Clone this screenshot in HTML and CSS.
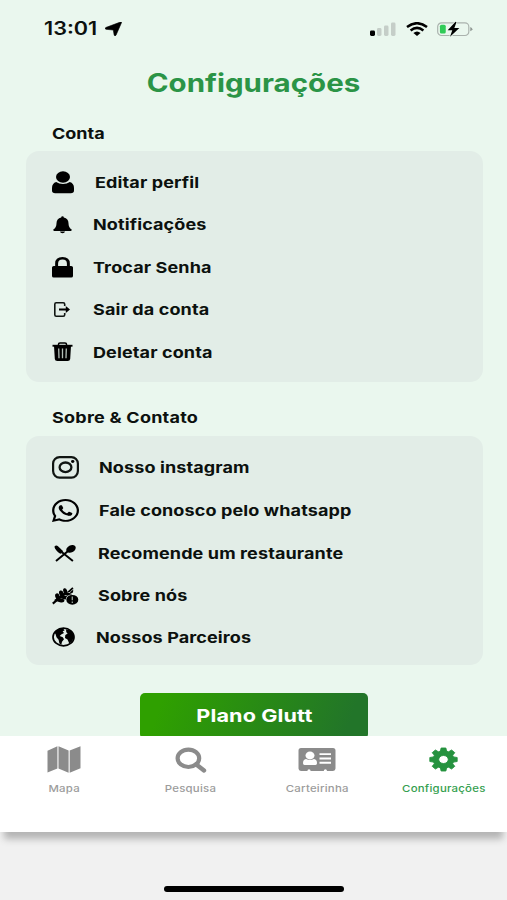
FILE: index.html
```html
<!DOCTYPE html>
<html lang="pt-BR">
<head>
<meta charset="utf-8">
<title>Configurações</title>
<link rel="stylesheet" href="styles.css">
</head>
<body>
<div class="screen">
  <header class="status">
    <div class="clock"><span class="time">13:01</span>
      <svg class="arrow" viewBox="0 0 17 14" preserveAspectRatio="none"><path d="M16.600.400 11 13.200Q10.200 14.600 9.200 13.200L8.300 8 1 7.300Q-.7 6.500.8 5.500L15.400.1Q16.800-.2 16.600.400Z" stroke="#000" stroke-width=".6"/></svg>
    </div>
    <div class="indicators">
      <svg width="26" height="14" viewBox="0 0 26 14"><rect x="0" y="8.500" width="5" height="5.500" rx="1.400"/><g fill="#c5cec8"><rect x="7" y="6" width="4.500" height="8" rx="1.400"/><rect x="14" y="3.500" width="4.500" height="10.500" rx="1.400"/><rect x="21" y=".5" width="4.500" height="13.500" rx="1.400"/></g></svg>
      <svg class="wifi" width="22" height="14" viewBox="0 0 22 14"><g fill="none" stroke="#000" stroke-width="2.500"><path d="M1 5Q11-2.600 21 5"/><path d="M4.600 8.500Q11 3.300 17.400 8.500"/></g><path d="M7.400 11Q11 7.800 14.600 11L11 13.900Z"/></svg>
      <svg class="battery" width="37" height="16" viewBox="0 0 37 16"><rect x=".7" y="1.700" width="32" height="13" rx="4" fill="none" stroke="#aab2ad" stroke-width="1.200"/><path d="M34.200 6Q36.400 7 36.400 8.200T34.200 10.400Z" fill="#929a95"/><rect x="3" y="3.700" width="6" height="9" rx="1.600" fill="#2fcb57"/><path d="M19 .5 11 9.200h4.700L13.400 16 23 7h-5.200L20 1Z" stroke="#eaf7ee" stroke-width="1.600" paint-order="stroke"/></svg>
    </div>
  </header>

  <main class="content">
    <h1><span>Configurações</span></h1>

    <h2><span>Conta</span></h2>
    <ul class="card account">
      <li class="profile"><svg width="22" height="23" viewBox="0 0 22 23"><ellipse cx="11" cy="6" rx="7" ry="5.700"/><path d="M4.200 11Q7 12.900 11 12.900T17.800 11Q22 12.300 22 17V19.500Q22 22.300 18.800 22.300H3.200Q0 22.300 0 19.500V17Q0 12.300 4.200 11Z"/></svg><span>Editar perfil</span></li>
      <li><svg class="bell" width="19" height="18" viewBox="0 0 19 18"><path d="M8.200 1.400Q8.200.2 9.500.2t1.300 1.200Q15.500 2.400 15.500 7.200 15.500 11.300 18.700 13.600 19 15 17.800 15H1.200Q0 15 .3 13.600 3.500 11.300 3.500 7.200 3.500 2.400 8.200 1.400ZM7 15.400h5Q11.800 17.200 9.500 17.200T7 15.400Z"/></svg><span>Notificações</span></li>
      <li><svg width="21" height="21" viewBox="0 0 20 21" preserveAspectRatio="none"><path fill-rule="evenodd" d="M3 9V6.500Q3 0 10 0t7 6.500V9H18.300Q20 9 20 10.500V19Q20 20.500 18.300 20.500H1.700Q0 20.500 0 19V10.500Q0 9 1.700 9ZM5.800 9h8.400V6.500Q14.200 2.500 10 2.500T5.800 6.500Z"/></svg><span>Trocar Senha</span></li>
      <li><svg class="exit" width="16" height="15" viewBox="0 0 16 15"><path d="M10.700 4V2.200Q10.700.8 9.200.8H2.200Q.8.800.8 2.200V12.800Q.8 14.200 2.200 14.200H9.200Q10.700 14.200 10.700 12.800V11" fill="none" stroke="#101512" stroke-width="1.600"/><path d="M5 6.400h6.800V4L16 7.500 11.800 11V8.600H5Z"/></svg><span>Sair da conta</span></li>
      <li><svg width="21" height="20" viewBox="0 0 21 20"><path d="M6.500 3.200V2.200Q6.500.9 8 .9H13Q14.500.9 14.500 2.200V3.200" fill="none" stroke="#000" stroke-width="1.500"/><path d="M.5 2.800H20.500V4.700H.5Z"/><path d="M2 4H19L18.200 17Q18 19 15.700 19H5.300Q3 19 2.800 17Z"/><path d="M6.700 6.500 7 16.300M10.500 6.500V16.300M14.300 6.500 14 16.300" stroke="#b4c0b9" stroke-width="1.300"/></svg><span>Deletar conta</span></li>
    </ul>

    <h2 class="second"><span>Sobre &amp; Contato</span></h2>
    <ul class="card contact">
      <li><svg width="27" height="23" viewBox="0 0 27 23"><g fill="none" stroke="#101512"><rect x="1.100" y="1.100" width="24.800" height="20.500" rx="6.500" stroke-width="2.200"/><ellipse cx="13.500" cy="11.300" rx="5.900" ry="4.800" stroke-width="2.300"/></g><ellipse cx="20.700" cy="5.500" rx="1.700" ry="1.400"/></svg><span>Nosso instagram</span></li>
      <li class="whatsapp"><svg width="27" height="23" viewBox="0 32 448 448" preserveAspectRatio="none"><path d="M380.900 97.100C339 55.100 283.200 32 223.900 32c-122.400 0-222 99.600-222 222 0 39.100 10.200 77.300 29.600 111L0 480l117.700-30.900c32.400 17.700 68.900 27 106.100 27h.1c122.300 0 224.100-99.600 224.100-222 0-59.300-25.200-115-67.100-157zm-157 341.600c-33.200 0-65.700-8.900-94-25.700l-6.700-4-69.800 18.300L72 359.200l-4.400-7c-18.500-29.400-28.200-63.300-28.200-98.200 0-101.700 82.800-184.500 184.600-184.500 49.300 0 95.600 19.200 130.400 54.100 34.800 34.900 56.200 81.200 56.100 130.500 0 101.800-84.900 184.600-186.600 184.600zm101.200-138.200c-5.500-2.800-32.800-16.200-37.900-18-5.100-1.900-8.800-2.800-12.500 2.800-3.700 5.600-14.300 18-17.600 21.800-3.200 3.700-6.500 4.200-12 1.400-32.600-16.300-54-29.100-75.500-66-5.700-9.800 5.700-9.100 16.300-30.300 1.800-3.700.9-6.900-.5-9.700-1.400-2.800-12.500-30.100-17.100-41.200-4.500-10.800-9.100-9.300-12.500-9.500-3.200-.2-6.900-.2-10.600-.2-3.700 0-9.700 1.400-14.800 6.900-5.100 5.600-19.400 19-19.400 46.300 0 27.300 19.900 53.700 22.600 57.400 2.800 3.700 39.100 59.700 94.800 83.800 35.200 15.200 49 16.500 66.600 13.900 10.700-1.600 32.800-13.400 37.400-26.400 4.600-13 4.600-24.100 3.200-26.400-1.300-2.500-5-3.900-10.500-6.600z"/></svg><span>Fale conosco pelo whatsapp</span></li>
      <li class="food"><svg width="22" height="17" viewBox="0 0 22 17"><path d="M.4 1.700Q2.200-.3 4 1.300L9.200 6.300 7.500 8.200 6.300 8.700Q1.500 5.800.4 1.700Z"/><path d="M8 7.300 18.900 16M2 16 15 5.300" fill="none" stroke="#000" stroke-width="2"/><ellipse cx="17" cy="3.900" rx="5" ry="3.500" transform="rotate(-28 17 3.900)"/></svg><span>Recomende um restaurante</span></li>
      <li class="about"><svg width="27" height="18" viewBox="0 0 27 18"><path d="M.8 16.600 5 13" stroke="#000" stroke-width="2.200"/><g><ellipse cx="5.500" cy="9.400" rx="2.200" ry="3.200" transform="rotate(-20 5.500 9.400)"/><ellipse cx="9.400" cy="6.600" rx="2.200" ry="3.200" transform="rotate(-20 9.400 6.600)"/><ellipse cx="13.200" cy="4" rx="1.900" ry="2.900" transform="rotate(-20 13.200 4)"/><ellipse cx="8.300" cy="13.300" rx="4.200" ry="2" transform="rotate(10 8.300 13.300)"/><ellipse cx="12.300" cy="10.300" rx="4.200" ry="1.900" transform="rotate(10 12.300 10.300)"/><ellipse cx="16.400" cy="7.300" rx="3.800" ry="1.600" transform="rotate(10 16.400 7.300)"/><path d="m14.800 5.300 5.500-5.100 1.200 1.200-4 3.800ZM18 5.200 21.300 2.600 21 5.500 18.500 6.400Z"/><path d="M3 14 15 5" stroke="#000" stroke-width="2.400"/></g><ellipse cx="20.300" cy="12.800" rx="6" ry="4.900" stroke="#e2ede7" paint-order="stroke" stroke-width="1.200"/><path d="M20.300 9.500V13.300M20.300 14.500V16.100" stroke="#9ba7a0" stroke-width="1.300"/></svg><span>Sobre nós</span></li>
      <li class="partners"><svg width="23" height="20" viewBox="0 0 23 20"><ellipse cx="11.500" cy="10" rx="10.500" ry="8.800" fill="none" stroke="#000" stroke-width="1.700"/><path d="M2.500 5.500 6.200 2.200 11.200 1.600 12.600 3.600 10.600 4.300 12 5.900 9.200 7.400 7.700 9 10.800 10.300 12 12.300 10 14.700 9.300 17.800 7.400 16.600 6.600 12.700 4.500 10.300 3.600 7.200ZM14 2.200 18.800 3.400 21.300 7.200 21.700 11 19.700 14.800 17.300 16.500 15.500 12.500 13 11 13.300 8 15.700 6.600 14.300 5.200Z"/></svg><span>Nossos Parceiros</span></li>
    </ul>
    <button class="plan"><span>Plano Glutt</span></button>
  </main>

  <nav class="tabs">
    <a><svg width="34" height="27" viewBox="0 0 34 27"><path d="M.5 4.800 10.400.2V22.400L.5 26.600ZM11.500.2 21.600 4.500V26.700L11.500 22.400ZM22.700 4.500 33.500.2V22.200L22.700 26.700Z"/></svg><span>Mapa</span></a>
    <a><svg width="32" height="27" viewBox="0 0 32 27"><ellipse cx="13.400" cy="12.300" rx="10.800" ry="8.700" fill="none" stroke="#8b8b8b" stroke-width="4.200"/><path d="m21 18.300 8 6.200" fill="none" stroke="#8b8b8b" stroke-width="4.400" stroke-linecap="round"/></svg><span>Pesquisa</span></a>
    <a><svg width="38" height="27" viewBox="0 0 38 27"><path d="M3 2H35Q37.500 2 37.500 4.500V22.600Q37.500 25 35 25H29Q29 23.300 27.400 23.300T25.800 25H12.600Q12.600 23.300 11 23.300T9.400 25H3Q.5 25 .5 22.600V4.500Q.5 2 3 2Z"/><g fill="#fff"><ellipse cx="12" cy="9.500" rx="4.500" ry="3.900"/><path d="M8 13Q12 15 16 13 19 13.300 19 17.300 19 19 17.500 19H6.500Q5 19 5 17.300 5 13.300 8 13ZM21.500 7.200H33V9.100H21.500ZM21.500 11.500H33V13.400H21.500ZM21.500 15.800H33V17.700H21.500Z"/></g></svg><span>Carteirinha</span></a>
    <a class="active"><svg width="30" height="27" viewBox="0 0 30 27"><g transform="translate(14.500 13.500) scale(1.190 1)"><path fill-rule="evenodd" d="M-2-11.500H2L2.600-8.400 4.300-7.700 6.800-9.500 9.500-6.800 7.700-4.300 8.400-2.600 11.500-2V2L8.400 2.600 7.700 4.300 9.500 6.800 6.800 9.500 4.300 7.700 2.600 8.400 2 11.500H-2L-2.600 8.400-4.300 7.700-6.800 9.500-9.500 6.800-7.700 4.300-8.400 2.600-11.500 2V-2L-8.400-2.600-7.700-4.300-9.500-6.800-6.800-9.500-4.300-7.700-2.600-8.400ZM0-4A4 4 0 1 0 0 4 4 4 0 1 0 0-4Z" stroke="#25923f" stroke-width=".8" stroke-linejoin="round"/></g></svg><span>Configurações</span></a>
  </nav>
  <div class="home"></div>
</div>
</body>
</html>
```
FILE: styles.css
```css
* { box-sizing: border-box; }
body { margin: 0; background: #f1f1f1; font-family: Inter, "Liberation Sans", sans-serif; color: #0c110e; }
svg { display: block; flex: none; }
h1, h2, ul { margin: 0; padding: 0; }
ul { list-style: none; }
span { display: inline-block; white-space: nowrap; transform: scaleX(1.2); transform-origin: left center; }
.screen { width: 507px; height: 900px; display: flex; flex-direction: column; overflow: hidden; }
.status { height: 56px; flex: none; display: flex; justify-content: space-between; padding: 0 34px 0 44px; background: #eaf7ee; }
.clock { display: flex; padding-top: 17px; }
.time { font-size: 18px; line-height: 24px; font-weight: 600; width: 61px; }
.arrow { width: 17px; height: 14px; margin-top: 5px; }
.indicators { display: flex; padding-top: 21.500px; }
.wifi { margin-left: 10px; }
.battery { margin-left: 9px; margin-top: -1px; width: 36px; }
.content { height: 680px; flex: none; overflow: hidden; background: #eaf7ee; }
h1 { height: 52px; line-height: 54px; font-size: 25px; font-weight: 700; color: #2b9446; text-align: center; }
h1 span, .plan span, .tabs span { transform-origin: center; }
h1 span { transform: scaleX(1.18); }
h2 { height: 43px; padding: 15px 0 0 52px; line-height: 21px; font-size: 15px; font-weight: 700; }
h2.second { height: 54px; padding-top: 26px; line-height: 20px; letter-spacing: .2px; }
.card { width: 457px; margin-left: 26px; padding: 10px 27px 0 26px; border-radius: 13px; background: #e2ede7; }
.account { height: 231px; }
.contact { height: 229px; }
li { height: 42.500px; display: flex; align-items: center; font-size: 15px; line-height: 20px; font-weight: 700; letter-spacing: .1px; }
li span { margin: 1px 0 0 auto; }
.account li span { width: 363px; }
.account .profile span { width: 361.500px; }
.contact li span { width: 357px; }
.contact .food span, .contact .about span { width: 358px; }
.contact .partners span { width: 360.500px; }
.contact .food, .contact .whatsapp, .contact .about { padding-top: 2px; }
.bell { margin-left: 1px; }
.exit, .food svg { margin-left: 2px; }
.plan { display: block; width: 228px; height: 46px; margin: 28px 0 0 140px; padding: 0; border: 0; border-radius: 5px; background: linear-gradient(110deg, #2fa000 10%, #227529 90%); color: #fff; font: 700 18px/44px Inter, sans-serif; letter-spacing: .1px; }
.tabs { height: 96px; flex: none; display: grid; grid-template-columns: repeat(4, 1fr); padding-left: 1px; background: #fff; box-shadow: 0 11px 7px -4px #b4b4b4; }
.tabs a { display: flex; flex-direction: column; align-items: center; padding-top: 10px; fill: #8b8b8b; color: #9c9c9c; font-size: 9.500px; line-height: 14px; font-weight: 500; letter-spacing: .2px; }
.tabs svg { margin-bottom: 9px; }
.tabs .active { color: #34a04f; fill: #25923f; }
.home { width: 180px; height: 6px; margin: 54px 0 0 164px; flex: none; border-radius: 3px; background: #000; }
```
